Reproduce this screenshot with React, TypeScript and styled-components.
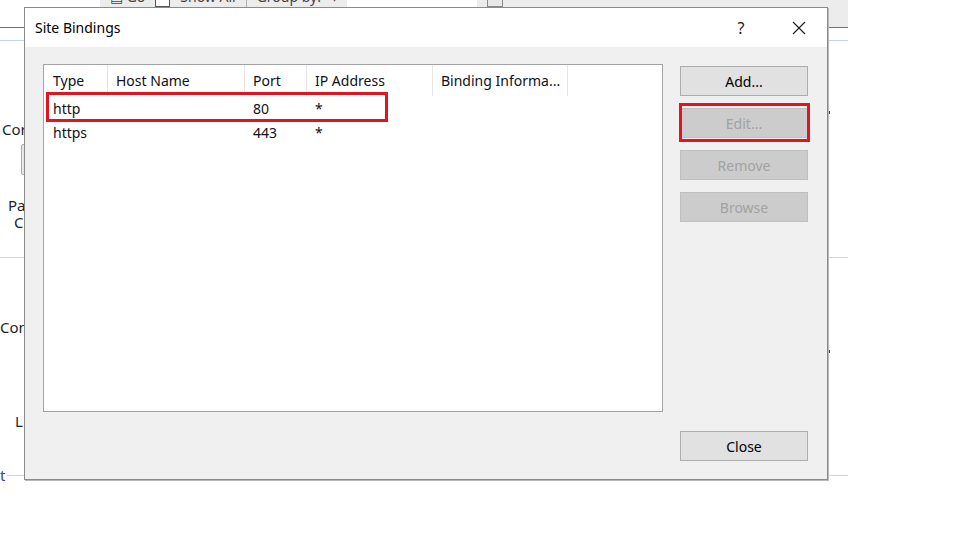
import React from "react";
import styled, { createGlobalStyle, css } from "styled-components";

const FONT = `"Noto Sans", "Open Sans", "Liberation Sans", sans-serif`;

const Global = createGlobalStyle`
  html, body { margin: 0; padding: 0; background: #ffffff; }
  body { font-family: ${FONT}; width: 960px; height: 540px; overflow: hidden; }
`;

const Page = styled.div`
  width: 960px;
  height: 540px;
  background: #ffffff;
`;

const Backdrop = styled.div`
  position: relative;
  width: 848px;
  height: 485px;
  display: flex;
  flex-direction: column;
  overflow: hidden;
  font-family: ${FONT};
  font-size: 15px;
  color: #1e1e1e;
`;

const Toolbar = styled.div`
  margin-left: 100px;
  height: 27px;
  display: flex;
  overflow: hidden;
`;

const ToolSegment = styled.div<{ $w?: number; $light?: boolean }>`
  ${(p) => (p.$w ? `width: ${p.$w}px;` : "flex: 1;")}
  background: ${(p) => (p.$light ? "#ffffff" : "#ececec")};
  display: flex;
  align-items: flex-start;
  gap: 10px;
  padding-left: 10px;
  box-sizing: border-box;
`;

const ToolText = styled.span`
  margin-top: -11px;
  line-height: 16px;
  font-size: 14px;
  color: #444;
  white-space: nowrap;
`;

const ToolBox = styled.span`
  margin-top: -9px;
  width: 13px;
  height: 14px;
  border: 1px solid #555;
  background: #fff;
`;

const ToolSep = styled.span`
  width: 1px;
  height: 8px;
  background: #b0b0b0;
`;

const DarkRule = styled.div`
  height: 1px;
  background: #6f6f8a;
`;

const BlueRule = styled.div<{ $top?: number; $w?: number; $left?: number }>`
  height: 1px;
  background: #c5d4ec;
  margin-top: ${(p) => p.$top ?? 0}px;
  margin-left: ${(p) => p.$left ?? 0}px;
  ${(p) => (p.$w ? `width: ${p.$w}px;` : "")}
`;

const Content = styled.div`
  display: flex;
  flex: 1;
`;

const LeftPane = styled.div`
  width: 828px;
  display: flex;
  flex-direction: column;
`;

const RightPane = styled.div`
  width: 20px;
  display: flex;
  flex-direction: column;
`;

const Frag = styled.div<{ $top: number; $left?: number; $link?: boolean; $h?: number }>`
  margin-top: ${(p) => p.$top}px;
  padding-left: ${(p) => p.$left ?? 0}px;
  line-height: ${(p) => p.$h ?? 20}px;
  height: ${(p) => p.$h ?? 20}px;
  white-space: nowrap;
  color: ${(p) => (p.$link ? "#3b3bc8" : "#1e1e2e")};
`;

const FragBox = styled.div`
  margin-top: 5px;
  margin-left: 21px;
  width: 10px;
  height: 31px;
  box-sizing: border-box;
  border: 1px solid #adadad;
  border-radius: 2px;
  background: #e6e6e6;
`;

const LinkRow = styled.div`
  margin-top: 34px;
  display: flex;
  align-items: center;
  height: 20px;
  gap: 2px;
`;

const Dot = styled.div<{ $top: number }>`
  margin-top: ${(p) => p.$top}px;
  width: 2px;
  height: 3px;
  background: #3b3b8a;
`;

/* ---------- Dialog ---------- */

const Dialog = styled.div`
  position: absolute;
  left: 24px;
  top: 7px;
  width: 804px;
  height: 473px;
  box-sizing: border-box;
  border: 1px solid #8a8a8a;
  box-shadow: 1px 1px 0 #b8b8b8;
  background: #f0f0f0;
  display: flex;
  flex-direction: column;
  font-family: ${FONT};
  color: #000;
`;

const TitleBar = styled.div`
  height: 39px;
  background: #ffffff;
  display: flex;
  align-items: center;
  padding-left: 10px;
  padding-right: 5px;
`;

const Title = styled.div`
  flex: 1;
  font-size: 14px;
  color: #000;
  margin-top: -1px;
`;

const TitleButton = styled.div<{ $gap?: number }>`
  width: 46px;
  height: 39px;
  margin-right: ${(p) => p.$gap ?? 0}px;
  display: flex;
  align-items: center;
  justify-content: center;
  font-size: 16px;
  color: #1a1a1a;
`;

const Body = styled.div`
  flex: 1;
  display: flex;
  padding: 17px 19px 18px 18px;
  gap: 17px;
`;

const ListBox = styled.div`
  width: 620px;
  height: 348px;
  box-sizing: border-box;
  border: 1px solid #a3a3a3;
  background: #ffffff;
  align-self: flex-start;
  font-size: 14px;
`;

const HeaderRow = styled.div`
  display: flex;
  height: 31px;
`;

const HeaderCell = styled.div<{ $w: number; $pad?: number }>`
  width: ${(p) => p.$w}px;
  box-sizing: border-box;
  border-right: 1px solid #e5e5e5;
  padding-left: ${(p) => p.$pad ?? 8}px;
  display: flex;
  align-items: center;
  white-space: nowrap;
  overflow: hidden;
  color: #101020;
`;

const Row = styled.div`
  position: relative;
  display: flex;
  height: 24px;
`;

const Cell = styled.div<{ $w: number; $pad?: number }>`
  width: ${(p) => p.$w}px;
  box-sizing: border-box;
  padding-left: ${(p) => p.$pad ?? 8}px;
  display: flex;
  align-items: center;
  white-space: nowrap;
  color: #101020;
`;

const highlight = css`
  position: absolute;
  box-sizing: border-box;
  border: 3px solid #e3141e;
  pointer-events: none;
`;

const RowHighlight = styled.div`
  ${highlight}
  left: 2px;
  top: -4px;
  width: 342px;
  height: 30px;
`;

const ButtonColumn = styled.div`
  width: 128px;
  display: flex;
  flex-direction: column;
  gap: 12px;
  padding-top: 2px;
`;

const Button = styled.button<{ $push?: boolean }>`
  height: 30px;
  width: 128px;
  box-sizing: border-box;
  margin: 0;
  ${(p) => (p.$push ? "margin-top: auto;" : "")}
  border: 1px solid #adadad;
  background: #e1e1e1;
  font-family: ${FONT};
  font-size: 14px;
  color: #000;
  padding: 0;
  &:disabled {
    background: #cccccc;
    border-color: #bfbfbf;
    color: #a2a2a2;
  }
`;

const Highlighted = styled.div`
  position: relative;
  height: 30px;
`;

const ButtonHighlight = styled.div`
  ${highlight}
  left: -1px;
  right: -2px;
  top: -5px;
  bottom: -4px;
`;

const columns = [
  { key: "type", label: "Type", w: 64, pad: 9 },
  { key: "host", label: "Host Name", w: 137 },
  { key: "port", label: "Port", w: 62 },
  { key: "ip", label: "IP Address", w: 126 },
  { key: "info", label: "Binding Informa...", w: 135 },
];

const bindings = [
  { type: "http", host: "", port: "80", ip: "*", info: "", marked: true },
  { type: "https", host: "", port: "443", ip: "*", info: "", marked: false },
];

const CloseIcon = () => (
  <svg width="14" height="14" viewBox="0 0 14 14">
    <path d="M1 1 L13 13 M13 1 L1 13" stroke="#1a1a1a" strokeWidth="1.1" fill="none" />
  </svg>
);

const GridIcon = () => (
  <svg width="16" height="14" viewBox="0 0 16 14" style={{ marginTop: -7 }}>
    <rect x="0.5" y="0.5" width="15" height="13" fill="#e8e8e8" stroke="#8a8a8a" />
    <rect x="3" y="3" width="4" height="3" fill="#b7c9a0" />
    <rect x="9" y="3" width="4" height="3" fill="#a9bcd8" />
  </svg>
);

export default function App() {
  return (
    <Page>
      <Global />
      <Backdrop>
        <Toolbar>
          <ToolSegment $w={247}>
            <ToolText>▤ Go</ToolText>
            <ToolBox />
            <ToolText>Show All</ToolText>
            <ToolSep />
            <ToolText>Group by:</ToolText>
            <ToolText>▾</ToolText>
          </ToolSegment>
          <ToolSegment $w={130} $light />
          <ToolSegment>
            <GridIcon />
          </ToolSegment>
        </Toolbar>
        <DarkRule />
        <BlueRule $top={12} />
        <Content>
          <LeftPane>
            <Frag $top={78} $left={2}>Cor</Frag>
            <FragBox />
            <Frag $top={22} $left={8} $h={17}>Pa</Frag>
            <Frag $top={0} $left={14} $h={17}>C</Frag>
            <BlueRule $top={26} />
            <Frag $top={59} $left={0}>Con</Frag>
            <Frag $top={74} $left={15}>L</Frag>
            <LinkRow>
              <Frag $top={0} $link>t</Frag>
              <BlueRule $w={20} />
            </LinkRow>
          </LeftPane>
          <RightPane>
            <Dot $top={70} />
            <BlueRule $top={143} />
            <Dot $top={92} />
            <BlueRule $top={122} />
          </RightPane>
        </Content>

        <Dialog>
          <TitleBar>
            <Title>Site Bindings</Title>
            <TitleButton $gap={12}>?</TitleButton>
            <TitleButton>
              <CloseIcon />
            </TitleButton>
          </TitleBar>
          <Body>
            <ListBox>
              <HeaderRow>
                {columns.map((c) => (
                  <HeaderCell key={c.key} $w={c.w} $pad={c.pad}>
                    {c.label}
                  </HeaderCell>
                ))}
              </HeaderRow>
              {bindings.map((b) => (
                <Row key={b.type}>
                  <Cell $w={64} $pad={9}>{b.type}</Cell>
                  <Cell $w={137}>{b.host}</Cell>
                  <Cell $w={62}>{b.port}</Cell>
                  <Cell $w={126}>{b.ip}</Cell>
                  <Cell $w={135}>{b.info}</Cell>
                  {b.marked && <RowHighlight />}
                </Row>
              ))}
            </ListBox>
            <ButtonColumn>
              <Button>Add...</Button>
              <Highlighted>
                <Button disabled>Edit...</Button>
                <ButtonHighlight />
              </Highlighted>
              <Button disabled>Remove</Button>
              <Button disabled>Browse</Button>
              <Button $push>Close</Button>
            </ButtonColumn>
          </Body>
        </Dialog>
      </Backdrop>
    </Page>
  );
}
